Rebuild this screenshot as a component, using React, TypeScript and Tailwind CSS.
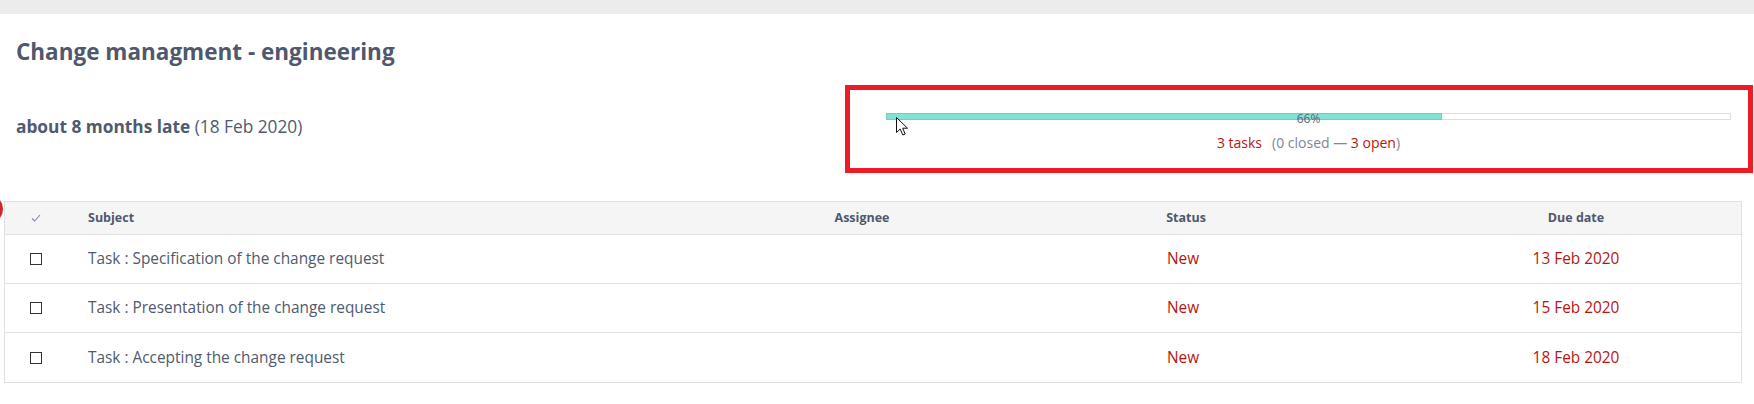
import React from 'react';

const tasks = [
  { subject: 'Task : Specification of the change request', status: 'New', due: '13 Feb 2020' },
  { subject: 'Task : Presentation of the change request', status: 'New', due: '15 Feb 2020' },
  { subject: 'Task : Accepting the change request', status: 'New', due: '18 Feb 2020' },
];

const cols = 'grid grid-cols-[61px_697px_198px_450px_330px]';

function Cursor() {
  return (
    <svg width="13" height="19" viewBox="0 0 13 19" className="absolute left-[9px] top-[3px]">
      <path d="M0.5 0.5 L0.5 15.5 L4.2 12 L6.8 18 L9.2 17 L6.7 11.2 L11.5 11.2 Z" fill="#fff" stroke="#111" strokeWidth="1" strokeLinejoin="round" />
    </svg>
  );
}

export default function App() {
  return (
    <div className="relative w-[1754px] h-[404px] overflow-hidden bg-white font-['Open_Sans',sans-serif] text-[#505a6e]">
      <div className="h-[14px] bg-[#ececec]" />

      <h1 className="pl-4 pt-[23px] text-[22.5px] leading-[29px] font-bold text-[#4f586d]">Change managment - engineering</h1>

      <div className="mt-[19px] flex items-center justify-between pl-4 pr-[1px]">
        <p className="mb-[4px] text-[17.3px] leading-5">
          <span className="font-bold">about 8 months late</span> (18 Feb 2020)
        </p>

        <div className="w-[908px] h-[88px] border-[5px] border-[#ed1c24] pl-[36px] pr-[17px] pt-[23px]">
          <div className="relative h-[7px] flex border border-[#dedede] bg-white">
            <div className="w-[66%] -m-px h-[7px] bg-[#80e3d3] border border-[#70cdbf]" />
            <span className="absolute left-0 right-0 top-[-2px] text-center text-[12px] leading-[14px] text-[#5a6478]">66%</span>
            <Cursor />
          </div>
          <div className="mt-[14px] text-center text-[14px] leading-[18px]">
            <span className="text-[#b8160f]">3 tasks</span>
            <span className="ml-[10px] text-[#7d8797]">
              (0 closed — <span className="text-[#b8160f]">3 open</span>)
            </span>
          </div>
        </div>
      </div>

      <div className="mt-[28px] ml-[4px] w-[1738px] border border-[#e0e0e0]">
        <div className={`${cols} h-[33px] items-center bg-[#f5f5f5] border-b border-[#e0e0e0] text-[12.5px] font-bold text-[#4f586d]`}>
          <div className="flex justify-center">
            <svg width="10" height="8" viewBox="0 0 10 8">
              <path d="M1 4.5 L3.6 7 L9 1" fill="none" stroke="#7b8aa6" strokeWidth="1.1" />
            </svg>
          </div>
          <div className="pl-[22px]">Subject</div>
          <div className="text-center">Assignee</div>
          <div className="text-center">Status</div>
          <div className="text-center">Due date</div>
        </div>
        {tasks.map((t, i) => (
          <div key={i} className={`${cols} h-[49px] items-center text-[15.4px] ${i < tasks.length - 1 ? 'border-b border-[#e0e0e0]' : ''}`}>
            <div className="flex justify-center">
              <div className="w-3 h-3 border border-[#333] bg-white" />
            </div>
            <div className="pl-[22px]">{t.subject}</div>
            <div />
            <div className="text-center pr-[6px] text-[#b8160f]">{t.status}</div>
            <div className="text-center text-[#b8160f]">{t.due}</div>
          </div>
        ))}
      </div>

      <div className="absolute left-[-27px] top-[194px] w-[30px] h-[30px] rounded-full border-[3px] border-[#d0272d]" />
    </div>
  );
}
